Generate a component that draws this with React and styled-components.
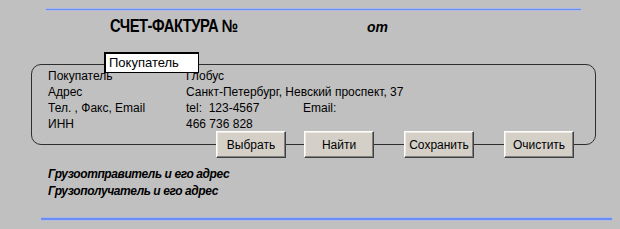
import React from "react";
import styled, { createGlobalStyle } from "styled-components";

const Global = createGlobalStyle`
  html, body { margin: 0; padding: 0; background: #c0c0c0; }
  body { width: 620px; height: 229px; overflow: hidden; font-family: "Liberation Sans", Arial, sans-serif; color: #000; }
`;

const Page = styled.div`
  display: flex;
  flex-direction: column;
  padding-top: 8px;
`;

const Rule = styled.div`
  margin-top: ${(p) => p.$top || 0}px;
  margin-left: ${(p) => p.$left}px;
  width: ${(p) => p.$width}px;
  height: ${(p) => p.$h}px;
  background: #6b8cf2;
  border-top: 1px solid #a7b8ea;
  border-bottom: 1px solid #b0bde0;
  box-sizing: border-box;
`;

const TitleRow = styled.div`
  display: flex;
  align-items: baseline;
  margin-top: 5px;
  padding-left: 110px;
  height: 20px;
`;

const Title = styled.div`
  font-size: 18px;
  font-weight: bold;
  line-height: 20px;
  letter-spacing: -0.6px;
  transform: scaleX(0.82);
  transform-origin: left center;
  width: 140px;
  white-space: nowrap;
`;

const Ot = styled.div`
  margin-left: 117px;
  font-size: 14px;
  font-weight: bold;
  font-style: italic;
  line-height: 20px;
`;

const Panel = styled.div`
  position: relative;
  margin-top: 28px;
  margin-left: 31px;
  width: 565px;
  box-sizing: border-box;
  border: 1px solid #2e2e2e;
  border-radius: 10px;
  padding: 3px 0 12px 16px;
`;

const Legend = styled.div`
  position: absolute;
  left: 72px;
  top: -13px;
  width: 95px;
  height: 21px;
  box-sizing: border-box;
  background: #fff;
  border: 1px solid #000;
  border-left-width: 2px;
  border-top-width: 2px;
  font-size: 13px;
  line-height: 18px;
  padding-left: 3px;
  z-index: 1;
`;

const Grid = styled.div`
  display: grid;
  grid-template-columns: 138px 117px auto;
  grid-auto-rows: 16px;
  font-size: 12px;
  line-height: 16px;
  white-space: nowrap;
`;

const Cell = styled.div`
  grid-column: ${(p) => p.$span || "auto"};
`;

const Buttons = styled.div`
  display: flex;
  margin-top: -14px;
  padding-left: 216px;
  position: relative;
`;

const Button = styled.button`
  width: 70px;
  height: 27px;
  margin-left: ${(p) => p.$gap || 0}px;
  box-sizing: border-box;
  background: #d4d0c8;
  border: 1px solid;
  border-color: #ffffff #404040 #404040 #ffffff;
  box-shadow: inset -1px -1px 0 #808080, inset 1px 1px 0 #eeeae2;
  font-family: "Liberation Sans", Arial, sans-serif;
  font-size: 12px;
  color: #000;
  padding: 0;
`;

const Notes = styled.div`
  display: flex;
  flex-direction: column;
  margin-top: 8px;
  padding-left: 48px;
`;

const Note = styled.div`
  font-size: 12px;
  font-weight: bold;
  font-style: italic;
  line-height: 17px;
  letter-spacing: -0.4px;
  white-space: nowrap;
`;

export default function App() {
  return (
    <>
      <Global />
      <Page>
        <Rule $left={46} $width={535} $h={3} />
        <TitleRow>
          <Title>СЧЕТ-ФАКТУРА №</Title>
          <Ot>от</Ot>
        </TitleRow>
        <Panel>
          <Legend>Покупатель</Legend>
          <Grid>
            <Cell>Покупатель</Cell>
            <Cell $span="2 / 4">Глобус</Cell>
            <Cell>Адрес</Cell>
            <Cell $span="2 / 4">Санкт-Петербург, Невский проспект, 37</Cell>
            <Cell>Тел. , Факс, Email</Cell>
            <Cell>tel:&nbsp;&nbsp;123-4567</Cell>
            <Cell>Email:</Cell>
            <Cell>ИНН</Cell>
            <Cell $span="2 / 4">466 736 828</Cell>
          </Grid>
        </Panel>
        <Buttons>
          <Button>Выбрать</Button>
          <Button $gap={18}>Найти</Button>
          <Button $gap={30}>Сохранить</Button>
          <Button $gap={30}>Очистить</Button>
        </Buttons>
        <Notes>
          <Note>Грузоотправитель и его адрес</Note>
          <Note>Грузополучатель и его адрес</Note>
        </Notes>
        <Rule $left={41} $width={571} $h={4} $top={17} />
      </Page>
    </>
  );
}
